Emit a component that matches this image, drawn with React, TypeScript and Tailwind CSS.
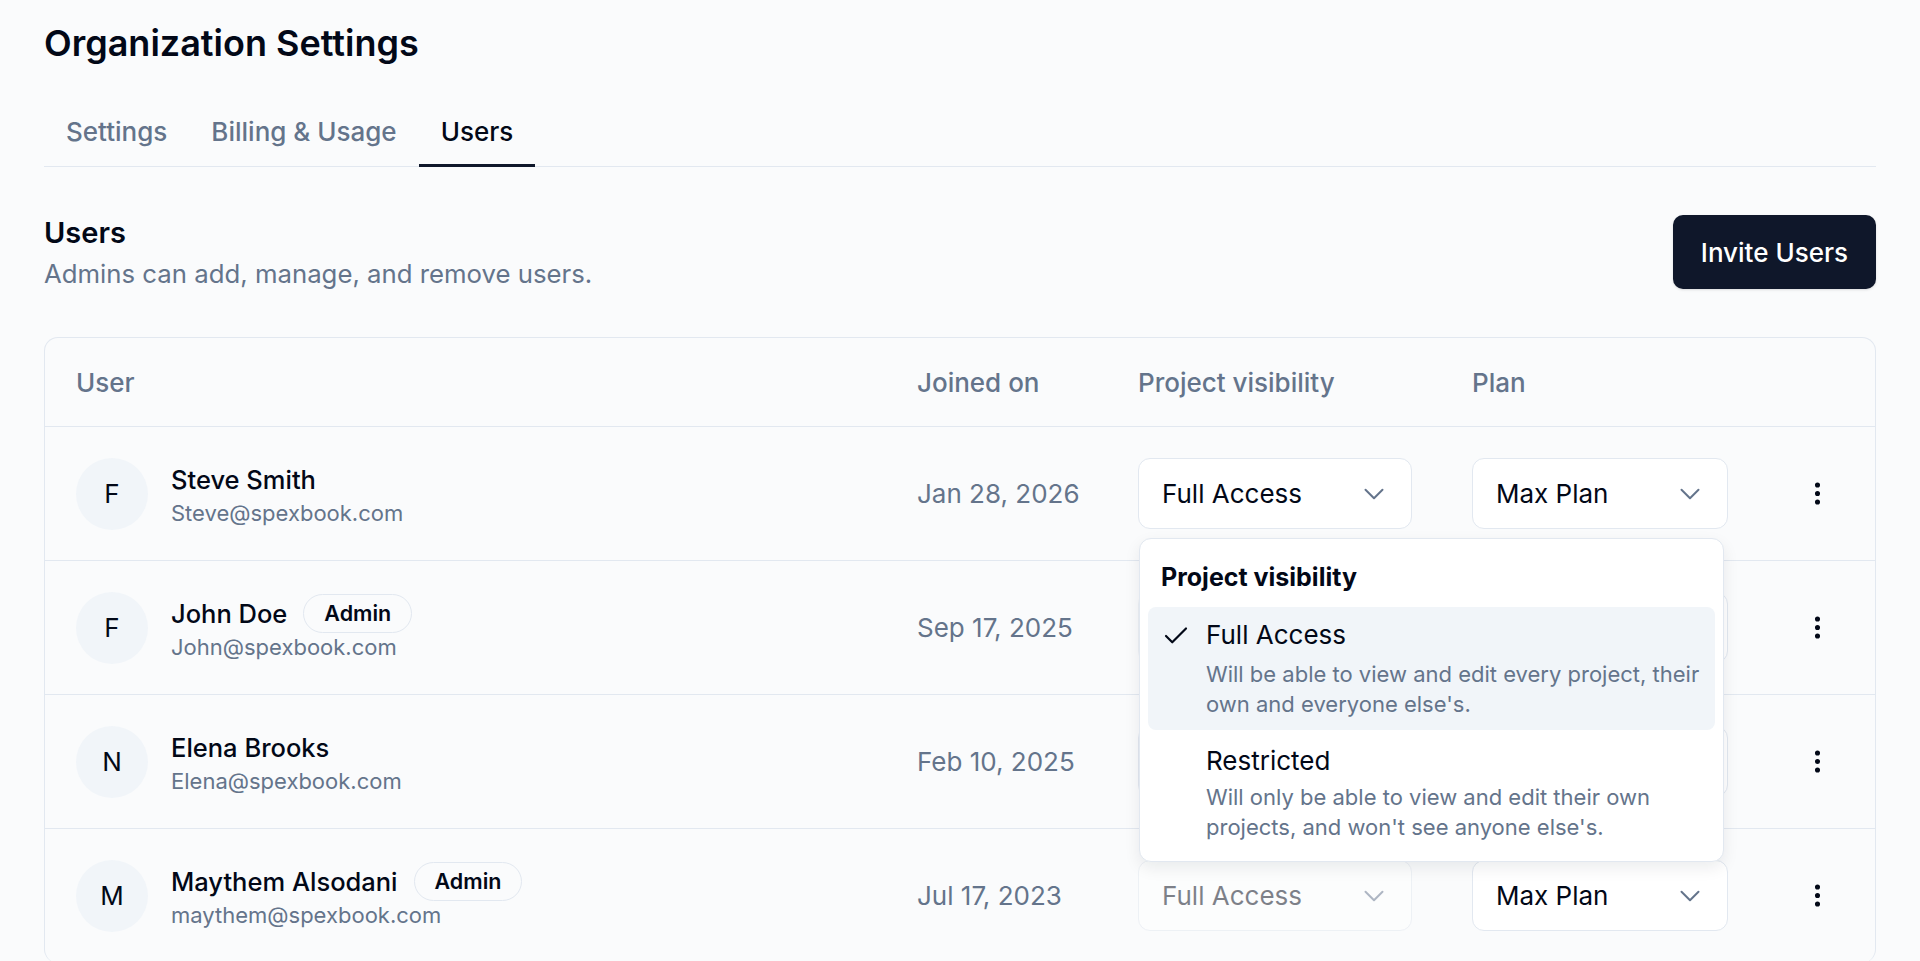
import { Check, ChevronDown, EllipsisVertical } from "lucide-react";

type Member = {
    initial: string;
    name: string;
    email: string;
    admin?: boolean;
    joined: string;
    visibility: string;
    plan: string;
};

const members: Member[] = [
    {
        initial: "F",
        name: "Steve Smith",
        email: "Steve@spexbook.com",
        joined: "Jan 28, 2026",
        visibility: "Full Access",
        plan: "Max Plan",
    },
    {
        initial: "F",
        name: "John Doe",
        email: "John@spexbook.com",
        admin: true,
        joined: "Sep 17, 2025",
        visibility: "Full Access",
        plan: "Max Plan",
    },
    {
        initial: "N",
        name: "Elena Brooks",
        email: "Elena@spexbook.com",
        joined: "Feb 10, 2025",
        visibility: "Restricted",
        plan: "Max Plan",
    },
    {
        initial: "M",
        name: "Maythem Alsodani",
        email: "maythem@spexbook.com",
        admin: true,
        joined: "Jul 17, 2023",
        visibility: "Full Access",
        plan: "Max Plan",
    },
];

const tabs = ["Settings", "Billing & Usage", "Users"];

const cols = "grid grid-cols-[841px_221px_334px_295px_100px] items-center pl-[31px] pr-[8px]";

function SelectBox({
    value,
    width,
    disabled,
}: {
    value: string;
    width: string;
    disabled?: boolean;
}) {
    return (
        <div
            className={`${width} h-[71px] flex items-center justify-between rounded-[12px] border border-[#e2e8f0] bg-white pl-[23px] pr-[20px] text-[26px] text-[#020817] ${
                disabled ? "opacity-50" : ""
            }`}
        >
            <span>{value}</span>
            <ChevronDown size={34} strokeWidth={1.4} className="text-[#64748b]" />
        </div>
    );
}

function VisibilityMenu() {
    return (
        <div className="absolute left-[1px] top-[80px] z-10 w-[585px] rounded-[12px] border border-[#e2e8f0] bg-white p-[8px] shadow-[0_6px_16px_rgba(15,23,42,0.08)]">
            <p className="px-[13px] pt-[14px] pb-[14px] text-[25px] leading-[32px] font-bold text-[#020817]">
                Project visibility
            </p>
            <div className="flex rounded-[8px] bg-[#f1f5f9] pl-[13px] pt-[13px] pb-[11px]">
                <div className="w-[45px] pt-[1px]">
                    <Check size={30} strokeWidth={1.75} className="text-[#020817]" />
                </div>
                <div>
                    <p className="text-[26px] leading-[30px] text-[#020817]">Full Access</p>
                    <p className="mt-[9px] text-[22px] leading-[30px] text-[#64748b]">
                        Will be able to view and edit every project, their
                        <br />
                        own and everyone else's.
                    </p>
                </div>
            </div>
            <div className="flex rounded-[8px] pl-[13px] pt-[16px] pb-[11px]">
                <div className="w-[45px]" />
                <div>
                    <p className="text-[26px] leading-[30px] text-[#020817]">Restricted</p>
                    <p className="mt-[6px] text-[22px] leading-[30px] text-[#64748b]">
                        Will only be able to view and edit their own
                        <br />
                        projects, and won't see anyone else's.
                    </p>
                </div>
            </div>
        </div>
    );
}

export default function App() {
    return (
        <div className="min-h-screen bg-[#fafbfc] font-['Inter',sans-serif] text-[#020817]">
            <div className="px-[44px] pt-[22px]">
                <h1 className="text-[36px] leading-[42px] font-semibold">Organization Settings</h1>

                <div className="mt-[35px] flex border-b border-[#e2e8f0]">
                    {tabs.map((tab) => (
                        <div
                            key={tab}
                            className={`-mb-px px-[22px] pt-[15px] pb-[14px] text-[26px] leading-[36px] font-medium border-b-[3px] ${
                                tab === "Users"
                                    ? "border-[#0f172a] text-[#020817]"
                                    : "border-transparent text-[#64748b]"
                            }`}
                        >
                            {tab}
                        </div>
                    ))}
                </div>

                <div className="mt-[47px] flex items-start justify-between">
                    <div>
                        <h2 className="text-[29px] leading-[38px] font-semibold">Users</h2>
                        <p className="mt-[4px] text-[25.75px] leading-[36px] text-[#64748b]">
                            Admins can add, manage, and remove users.
                        </p>
                    </div>
                    <button className="mt-[1px] h-[74px] rounded-[10px] bg-[#0f172a] px-[28px] text-[26px] font-medium text-white shadow-sm">
                        Invite Users
                    </button>
                </div>

                <div className="mt-[45px] rounded-[14px] border border-b-0 border-[#e2e8f0]">
                    <div className={`${cols} h-[89px] border-b border-[#e2e8f0] text-[26px] font-medium text-[#64748b]`}>
                        <span>User</span>
                        <span>Joined on</span>
                        <span>Project visibility</span>
                        <span>Plan</span>
                        <span />
                    </div>

                    {members.map((m, i) => (
                        <div key={m.email} className={`${cols} h-[134px] border-b border-[#e2e8f0]`}>
                            <div className="flex items-center gap-[23px]">
                                <div className="flex h-[72px] w-[72px] items-center justify-center rounded-full bg-[#f1f5f9] text-[26px]">
                                    {m.initial}
                                </div>
                                <div className="mt-[4px] flex flex-col gap-[2px]">
                                    <div className="flex h-[32px] items-center gap-[16px]">
                                        <span className="text-[25.5px] leading-[32px] font-medium">{m.name}</span>
                                        {m.admin && (
                                            <span className="flex h-[39px] items-center rounded-full border border-[#e2e8f0] px-[20px] text-[21.5px] font-semibold">
                                                Admin
                                            </span>
                                        )}
                                    </div>
                                    <span className="text-[22px] leading-[30px] text-[#64748b]">{m.email}</span>
                                </div>
                            </div>
                            <span className="text-[26px] text-[#64748b]">{m.joined}</span>
                            <div className="relative">
                                <SelectBox value={m.visibility} width="w-[274px]" disabled={m.admin} />
                                {i === 0 && <VisibilityMenu />}
                            </div>
                            <SelectBox value={m.plan} width="w-[256px]" />
                            <div className="flex justify-center">
                                <EllipsisVertical size={29} strokeWidth={2.2} className="text-[#020817]" />
                            </div>
                        </div>
                    ))}
                </div>
            </div>
        </div>
    );
}
